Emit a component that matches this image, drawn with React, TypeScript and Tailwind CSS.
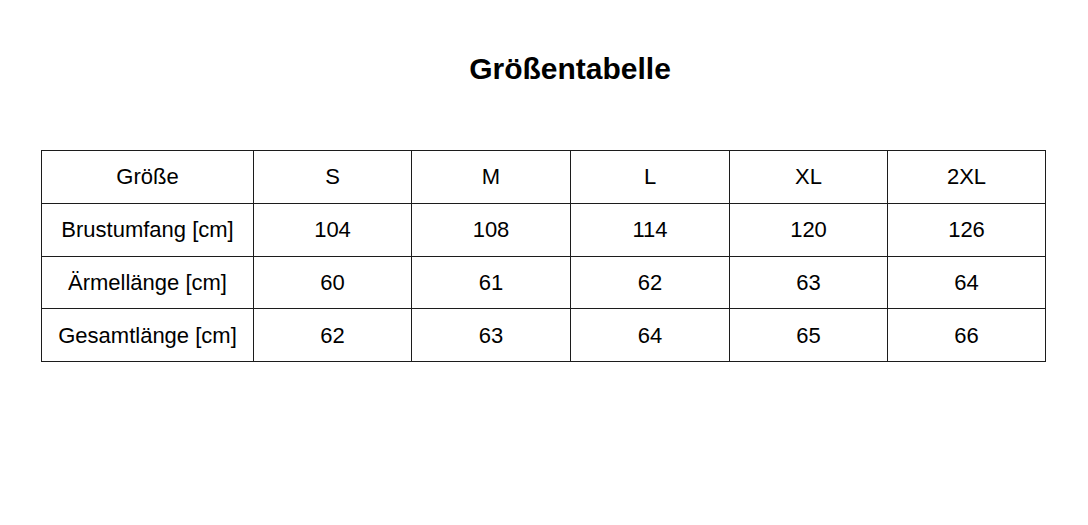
import React from "react";

const sizes = ["S", "M", "L", "XL", "2XL"];

const rows: { label: string; values: number[] }[] = [
  { label: "Brustumfang [cm]", values: [104, 108, 114, 120, 126] },
  { label: "Ärmellänge [cm]", values: [60, 61, 62, 63, 64] },
  { label: "Gesamtlänge [cm]", values: [62, 63, 64, 65, 66] },
];

const cell = "border border-[#1c1c1c] h-[52.75px] p-0 text-center align-middle font-normal";

export default function App() {
  return (
    <div
      className="w-[1088px] h-[525px] bg-white text-black"
      style={{ fontFamily: '"Liberation Sans", Arial, sans-serif' }}
    >
      <div className="pt-[54px] pl-[52px] flex justify-center">
        <h1 className="text-[30px] leading-none font-bold">Größentabelle</h1>
      </div>
      <div className="mt-[66px] pl-[41px]">
        <table className="border-collapse table-fixed w-[1004px] text-[22px]">
          <colgroup>
            <col className="w-[212px]" />
            <col className="w-[158px]" />
            <col className="w-[159px]" />
            <col className="w-[159px]" />
            <col className="w-[158px]" />
            <col className="w-[158px]" />
          </colgroup>
          <thead>
            <tr>
              <th className={cell}>Größe</th>
              {sizes.map((s) => (
                <th key={s} className={cell}>
                  {s}
                </th>
              ))}
            </tr>
          </thead>
          <tbody>
            {rows.map((row) => (
              <tr key={row.label}>
                <td className={cell}>{row.label}</td>
                {row.values.map((v, i) => (
                  <td key={i} className={cell}>
                    {v}
                  </td>
                ))}
              </tr>
            ))}
          </tbody>
        </table>
      </div>
    </div>
  );
}
